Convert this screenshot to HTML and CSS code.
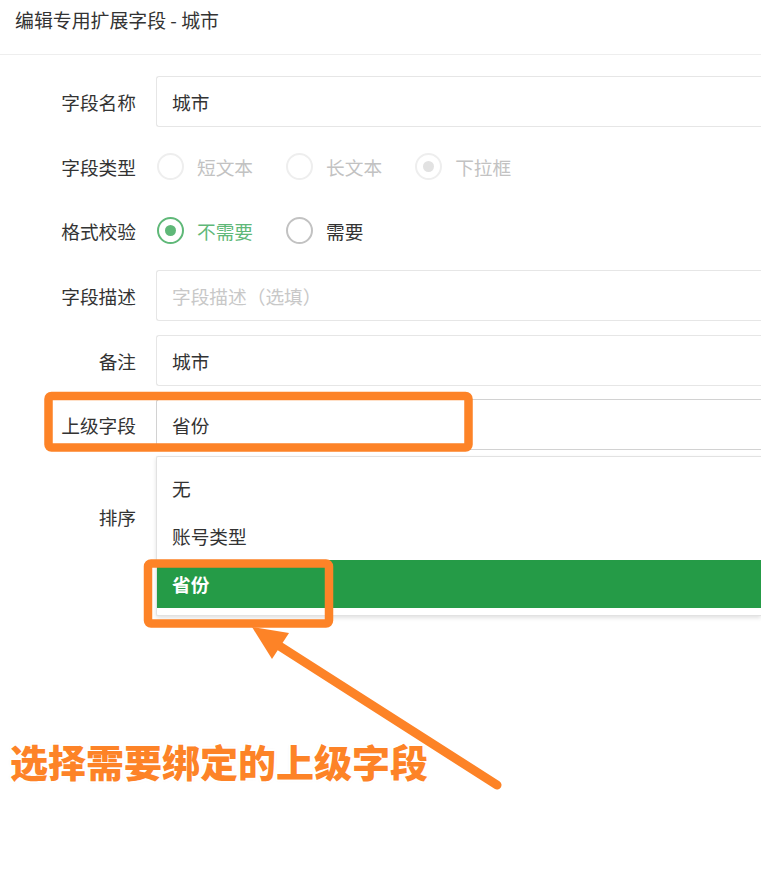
FILE: index.html
```html
<!DOCTYPE html>
<html lang="zh-CN">
<head>
  <meta charset="UTF-8" />
  <meta name="viewport" content="width=device-width, initial-scale=1.0"/>
  <title>编辑专用扩展字段 - 城市</title>
  <link rel="stylesheet" href="styles.css">
</head>
<body>

  <div class="dialog">
    <div class="dialog-title">编辑专用扩展字段 - 城市</div>

    <form class="form">
      <div class="form-item">
        <label class="form-label">字段名称</label>
        <div class="form-block"><input class="input" type="text" value="城市" /></div>
      </div>

      <div class="form-item">
        <label class="form-label">字段类型</label>
        <div class="form-block radios">
          <span class="radio disabled"><i class="radio-icon"></i>短文本</span>
          <span class="radio disabled"><i class="radio-icon"></i>长文本</span>
          <span class="radio disabled checked"><i class="radio-icon"></i>下拉框</span>
        </div>
      </div>

      <div class="form-item">
        <label class="form-label">格式校验</label>
        <div class="form-block radios">
          <span class="radio checked"><i class="radio-icon"></i>不需要</span>
          <span class="radio"><i class="radio-icon"></i>需要</span>
        </div>
      </div>

      <div class="form-item">
        <label class="form-label">字段描述</label>
        <div class="form-block"><input class="input" type="text" placeholder="字段描述（选填）" /></div>
      </div>

      <div class="form-item">
        <label class="form-label">备注</label>
        <div class="form-block"><input class="input" type="text" value="城市" /></div>
      </div>

      <div class="form-item">
        <label class="form-label">上级字段</label>
        <div class="form-block select">
          <input class="input input-focus" type="text" value="省份" readonly />
          <dl class="select-options">
            <dd>无</dd>
            <dd>账号类型</dd>
            <dd class="selected">省份</dd>
          </dl>
        </div>
      </div>

      <div class="form-item form-item-sort">
        <label class="form-label">排序</label>
        <div class="form-block"><input class="input" type="text" value="0" /></div>
      </div>
    </form>
  </div>

  <!-- hand-drawn marks on top of the form -->
  <svg class="marks" width="761" height="878" viewBox="0 0 761 878">
    <g fill="none" stroke="#fd8327" stroke-width="8.5" stroke-linejoin="round">
      <rect x="48.5" y="396" width="420" height="51.5" rx="3" />
      <rect x="148" y="563.5" width="181" height="60" rx="3" />
    </g>
    <line x1="497" y1="785" x2="270" y2="640" stroke="#fd8327" stroke-width="9" stroke-linecap="round" />
    <polygon points="252,627 289,633 272,659" fill="#fd8327" />
  </svg>

  <div class="callout">选择需要绑定的上级字段</div>

</body>
</html>
```

FILE: styles.css
```css
html, body {
  margin: 0;
  padding: 0;
  overflow: hidden;
  background: #fff;
}

body {
  font-family: "Noto Sans CJK SC", "Noto Sans", sans-serif;
  font-size: 18.7px;
  color: #333;
  width: 761px;
  height: 878px;
  position: relative;
}

.dialog {
  width: 761px;
}

.dialog-title {
  height: 54px;
  line-height: 40px;
  padding: 0 15px;
  border-bottom: 1px solid #eee;
  font-size: 18.9px;
}

.form {
  padding-top: 21px;
}

.form-item {
  display: flex;
  align-items: flex-start;
  margin-bottom: 13.7px;
}

.form-label {
  width: 136px;
  flex: none;
  padding-right: 20px;
  line-height: 51px;
  text-align: right;
}

.form-item-sort .form-label {
  padding-top: 27px;
}

.form-block {
  flex: 1;
  min-width: 0;
  position: relative;
}

/* the fields run on past the right edge of the dialog */
.input {
  display: block;
  box-sizing: border-box;
  width: 100%;
  height: 51px;
  padding: 0 15px;
  border: 1px solid #e6e6e6;
  border-right: none;
  border-radius: 3px 0 0 3px;
  font-family: inherit;
  font-size: 18.7px;
  color: #333;
  background: #fff;
  outline: none;
}

.input::placeholder {
  color: #c8c8c8;
}

.input-focus {
  border-color: #d2d2d2;
}

/* radio groups */
.radios {
  display: flex;
  align-items: center;
  height: 51px;
}

.radio {
  display: inline-flex;
  align-items: center;
  margin-right: 32px;
  cursor: pointer;
}

.radio-icon {
  box-sizing: border-box;
  width: 27px;
  height: 27px;
  margin: 0 13px 0 1px;
  border: 2px solid #c2c2c2;
  border-radius: 50%;
  display: flex;
  align-items: center;
  justify-content: center;
}

.radio.checked {
  color: #5fb878;
}

.radio.checked .radio-icon {
  border-color: #5fb878;
}

.radio.checked .radio-icon::after {
  content: "";
  width: 11px;
  height: 11px;
  border-radius: 50%;
  background: #5fb878;
}

.radio.disabled {
  color: #c2c2c2;
  cursor: not-allowed;
}

.radio.disabled .radio-icon {
  border-color: #eee;
}

.radio.disabled.checked .radio-icon::after {
  background: #e2e2e2;
}

/* select dropdown */
.select-options {
  position: absolute;
  left: 0;
  right: 0;
  top: 57px;
  z-index: 10;
  margin: 0;
  padding: 7px 0;
  background: #fff;
  border: 1px solid #e2e2e2;
  border-right: none;
  border-radius: 2px 0 0 2px;
  box-shadow: 0 2px 4px rgba(0, 0, 0, 0.12);
}

.select-options dd {
  margin: 0;
  padding: 0 15px;
  height: 48px;
  line-height: 48px;
}

.select-options dd.selected {
  background: #259b47;
  color: #fff;
  font-weight: bold;
}

/* annotation layer */
.marks {
  position: absolute;
  left: 0;
  top: 0;
  z-index: 20;
  pointer-events: none;
}

.callout {
  position: absolute;
  left: 10px;
  top: 735px;
  z-index: 20;
  font-size: 38px;
  font-weight: 900;
  line-height: 52px;
  color: #fd8327;
  text-shadow:
    2px 0 0 #fff, -2px 0 0 #fff, 0 2px 0 #fff, 0 -2px 0 #fff,
    2px 2px 0 #fff, -2px -2px 0 #fff, 2px -2px 0 #fff, -2px 2px 0 #fff,
    0 0 3px #bbb;
}
```
